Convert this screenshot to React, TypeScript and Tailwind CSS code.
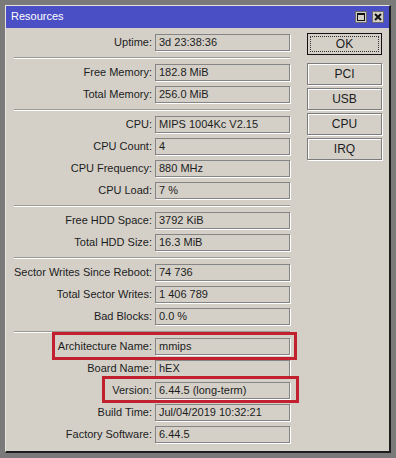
type Row = { label: string; value: string };

const groups: Row[][] = [
  [{ label: "Uptime:", value: "3d 23:38:36" }],
  [
    { label: "Free Memory:", value: "182.8 MiB" },
    { label: "Total Memory:", value: "256.0 MiB" },
  ],
  [
    { label: "CPU:", value: "MIPS 1004Kc V2.15" },
    { label: "CPU Count:", value: "4" },
    { label: "CPU Frequency:", value: "880 MHz" },
    { label: "CPU Load:", value: "7 %" },
  ],
  [
    { label: "Free HDD Space:", value: "3792 KiB" },
    { label: "Total HDD Size:", value: "16.3 MiB" },
  ],
  [
    { label: "Sector Writes Since Reboot:", value: "74 736" },
    { label: "Total Sector Writes:", value: "1 406 789" },
    { label: "Bad Blocks:", value: "0.0 %" },
  ],
  [
    { label: "Architecture Name:", value: "mmips" },
    { label: "Board Name:", value: "hEX" },
    { label: "Version:", value: "6.44.5 (long-term)" },
    { label: "Build Time:", value: "Jul/04/2019 10:32:21" },
    { label: "Factory Software:", value: "6.44.5" },
  ],
];

const buttons = ["PCI", "USB", "CPU", "IRQ"];

function Field({ label, value }: Row) {
  return (
    <div className="flex items-center h-[22px]">
      <div className="w-[146px] text-right text-[#1c1c1c] whitespace-nowrap">{label}</div>
      <div className="ml-[3px] w-[135px] h-[17px] border border-[#858585] shadow-[1px_1px_0_#ffffff] flex items-center pl-[3px] text-[#1c1c1c] whitespace-nowrap overflow-hidden">
        {value}
      </div>
    </div>
  );
}

function Separator() {
  return (
    <div className="h-[8px] flex items-center">
      <div className="ml-[8px] w-[276px] h-px bg-[#9c9a96] shadow-[0_1px_0_#ffffff]" />
    </div>
  );
}

export default function App() {
  return (
    <div
      className="relative w-[396px] h-[458px] bg-[#7a7a7a] p-[5px] text-[11px] leading-none"
      style={{ fontFamily: '"Liberation Sans", Arial, sans-serif' }}
    >
      <div className="h-full flex flex-col bg-[#d4d0c8] border-l border-t border-[#e6e4df] border-r-2 border-b-2 border-r-[#1e1e1e] border-b-[#1e1e1e]">
        {/* title bar */}
        <div className="h-[22px] bg-[#4b4fc6] flex items-center pl-[5px] pr-[5px]">
          <span className="text-white text-[11px] mt-[-1px]">Resources</span>
          <div className="ml-auto flex gap-[5px]">
            <div className="w-[12px] h-[12px] bg-[#d4d0c8] border border-[#6a6a6a] flex items-center justify-center">
              <div className="w-[8px] h-[8px] border border-[#111] border-t-2" />
            </div>
            <div className="w-[12px] h-[12px] bg-[#d4d0c8] border border-[#6a6a6a] flex items-center justify-center">
              <svg width="8" height="8" viewBox="0 0 8 8">
                <path d="M1 1L7 7M7 1L1 7" stroke="#111" strokeWidth="2" />
              </svg>
            </div>
          </div>
        </div>

        {/* body */}
        <div className="flex pt-[3px]">
          <div className="flex flex-col">
            {groups.map((g, i) => (
              <div key={i}>
                {i > 0 && <Separator />}
                {g.map((r) => (
                  <Field key={r.label} {...r} />
                ))}
              </div>
            ))}
          </div>

          <div className="ml-[17px] mt-[2px] flex flex-col gap-[3px] w-[75px]">
            <div className="h-[22px] border border-[#111] flex items-center justify-center p-[2px] mb-[5px]">
              <div className="w-full h-full border border-dotted border-[#333] flex items-center justify-center text-[12px] text-[#1c1c1c]">
                OK
              </div>
            </div>
            {buttons.map((b) => (
              <div
                key={b}
                className="h-[22px] border border-[#7c7c7c] shadow-[1px_1px_0_#ffffff,inset_1px_1px_0_#ffffff] flex items-center justify-center text-[12px] text-[#1c1c1c]"
              >
                {b}
              </div>
            ))}
          </div>
        </div>
      </div>

      {/* red annotation boxes */}
      <div className="absolute left-[52px] top-[332px] w-[245px] h-[28px] border-[3px] border-[#c3202f]" />
      <div className="absolute left-[102px] top-[376px] w-[197px] h-[27px] border-[3px] border-[#c3202f]" />
    </div>
  );
}
